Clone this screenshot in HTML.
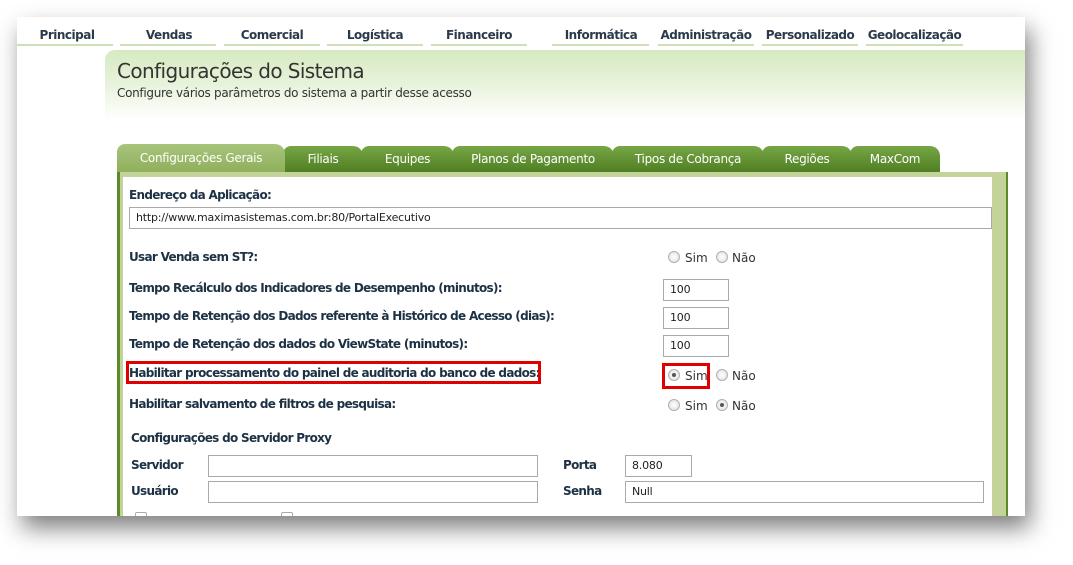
<!DOCTYPE html>
<html><head><meta charset="utf-8"><style>
*{margin:0;padding:0;box-sizing:border-box}
body{width:1073px;height:565px;background:#fff;position:relative;overflow:hidden;font-family:"DejaVu Sans","Liberation Sans",sans-serif;color:#1d3145}
.frame{position:absolute;left:17px;top:17px;width:1008px;height:499px;background:#fff;box-shadow:5px 12px 22px rgba(0,0,0,.5);overflow:hidden}
.a{position:absolute;white-space:nowrap}
.nav{font-size:12px;font-weight:bold;top:11px;text-align:center;color:#2b3a4a;letter-spacing:-0.5px}
.ul{position:absolute;top:27px;height:2px;background:#cfe0b6}
.banner{position:absolute;left:88px;top:33px;width:920px;height:70px;border-radius:10px 0 0 0;background:linear-gradient(180deg,#d6eac0 0%,#e8f3dc 50%,#fff 100%)}
.tab{position:absolute;top:129px;height:26px;border-radius:8px 10px 0 0;background:linear-gradient(#76a644,#4f7f23);color:#fff;font-size:12px;text-align:center;line-height:26px;letter-spacing:-0.3px}
.lbl{font-size:12px;font-weight:bold;letter-spacing:-0.7px;color:#1d3145}
.inp{position:absolute;border:1px solid #a9a9a9;background:#fff;font-size:11px;padding-left:6px;color:#222;letter-spacing:-0.2px}
.rad{position:absolute;width:12px;height:12px;border-radius:50%;border:1px solid #b0b0b0;background:radial-gradient(#fff,#ddd)}
.rad.on::after{content:"";position:absolute;left:3px;top:3px;width:4px;height:4px;border-radius:50%;background:#555}
.rt{position:absolute;font-size:12px;color:#333}
</style></head><body>
<div class="frame">
<div class="a nav" style="left:0;width:100px">Principal</div><div class="ul" style="left:0;width:96px"></div>
<div class="a nav" style="left:103px;width:98px">Vendas</div><div class="ul" style="left:103px;width:96px"></div>
<div class="a nav" style="left:207px;width:96px">Comercial</div><div class="ul" style="left:207px;width:96px"></div>
<div class="a nav" style="left:310px;width:96px">Logística</div><div class="ul" style="left:310px;width:96px"></div>
<div class="a nav" style="left:414px;width:96px">Financeiro</div><div class="ul" style="left:414px;width:96px"></div>
<div class="a nav" style="left:535px;width:98px">Informática</div><div class="ul" style="left:535px;width:97px"></div>
<div class="a nav" style="left:641px;width:96px">Administração</div><div class="ul" style="left:641px;width:96px"></div>
<div class="a nav" style="left:745px;width:96px">Personalizado</div><div class="ul" style="left:745px;width:96px"></div>
<div class="a nav" style="left:849px;width:97px">Geolocalização</div><div class="ul" style="left:849px;width:97px"></div>
<div class="banner"></div>
<div class="a" style="left:100px;top:42px;font-size:20px;color:#333;letter-spacing:-0.6px">Configurações do Sistema</div>
<div class="a" style="left:100px;top:69px;font-size:12px;color:#333;letter-spacing:-0.3px">Configure vários parâmetros do sistema a partir desse acesso</div>
<div class="tab" style="left:266px;width:80px">Filiais</div>
<div class="tab" style="left:344px;width:93px">Equipes</div>
<div class="tab" style="left:435px;width:162px">Planos de Pagamento</div>
<div class="tab" style="left:595px;width:152px">Tipos de Cobrança</div>
<div class="tab" style="left:745px;width:90px">Regiões</div>
<div class="tab" style="left:833px;width:90px">MaxCom</div>
<div class="tab" style="left:100px;width:168px;top:127px;height:28px;background:linear-gradient(#a8c47c,#8fb05c);line-height:28px">Configurações Gerais</div>
<div style="position:absolute;left:100px;top:155px;width:891px;height:345px;background:#c4d39a;border-left:3px solid #5a8a2a;border-right:2px solid #5a8a2a"></div>
<div style="position:absolute;left:106px;top:160px;width:869px;height:340px;background:#fff"></div>
<div class="a lbl" style="left:112px;top:171px">Endereço da Aplicação:</div>
<div class="inp" style="left:112px;top:190px;width:863px;height:22px;line-height:20px">http://www.maximasistemas.com.br:80/PortalExecutivo</div>
<div class="a lbl" style="left:112px;top:233px">Usar Venda sem ST?:</div>
<div class="a lbl" style="left:112px;top:264px">Tempo Recálculo dos Indicadores de Desempenho (minutos):</div>
<div class="a lbl" style="left:112px;top:292px">Tempo de Retenção dos Dados referente à Histórico de Acesso (dias):</div>
<div class="a lbl" style="left:112px;top:320px">Tempo de Retenção dos dados do ViewState (minutos):</div>
<div class="a lbl" style="left:112px;top:349px">Habilitar processamento do painel de auditoria do banco de dados:</div>
<div style="position:absolute;left:109px;top:344px;width:415px;height:23px;border:3px solid #e00000"></div>
<div class="a lbl" style="left:112px;top:380px">Habilitar salvamento de filtros de pesquisa:</div>
<div class="inp" style="left:646px;top:262px;width:66px;height:22px;line-height:20px">100</div>
<div class="inp" style="left:646px;top:290px;width:66px;height:22px;line-height:20px">100</div>
<div class="inp" style="left:646px;top:318px;width:66px;height:22px;line-height:20px">100</div>
<div class="rad" style="left:651px;top:234px"></div><div class="rt" style="left:668px;top:234px">Sim</div>
<div class="rad" style="left:699px;top:234px"></div><div class="rt" style="left:715px;top:234px">Não</div>
<div class="rad on" style="left:651px;top:352px"></div><div class="rt" style="left:668px;top:352px">Sim</div>
<div class="rad" style="left:699px;top:352px"></div><div class="rt" style="left:715px;top:352px">Não</div>
<div style="position:absolute;left:645px;top:346px;width:48px;height:26px;border:3px solid #e00000"></div>
<div class="rad" style="left:651px;top:382px"></div><div class="rt" style="left:668px;top:382px">Sim</div>
<div class="rad on" style="left:699px;top:382px"></div><div class="rt" style="left:715px;top:382px">Não</div>
<div class="a lbl" style="left:114px;top:414px">Configurações do Servidor Proxy</div>
<div class="a lbl" style="left:114px;top:441px">Servidor</div>
<div class="inp" style="left:191px;top:438px;width:330px;height:22px"></div>
<div class="a lbl" style="left:546px;top:441px">Porta</div>
<div class="inp" style="left:608px;top:438px;width:67px;height:22px;line-height:20px">8.080</div>
<div class="a lbl" style="left:114px;top:467px">Usuário</div>
<div class="inp" style="left:191px;top:464px;width:330px;height:22px"></div>
<div class="a lbl" style="left:546px;top:467px">Senha</div>
<div class="inp" style="left:608px;top:464px;width:359px;height:22px;line-height:20px">Null</div>
<div style="position:absolute;left:118px;top:495px;width:12px;height:12px;border:1px solid #aaa;border-radius:2px"></div>
<div style="position:absolute;left:264px;top:495px;width:12px;height:12px;border:1px solid #aaa;border-radius:2px"></div>
</div>
</body></html>
